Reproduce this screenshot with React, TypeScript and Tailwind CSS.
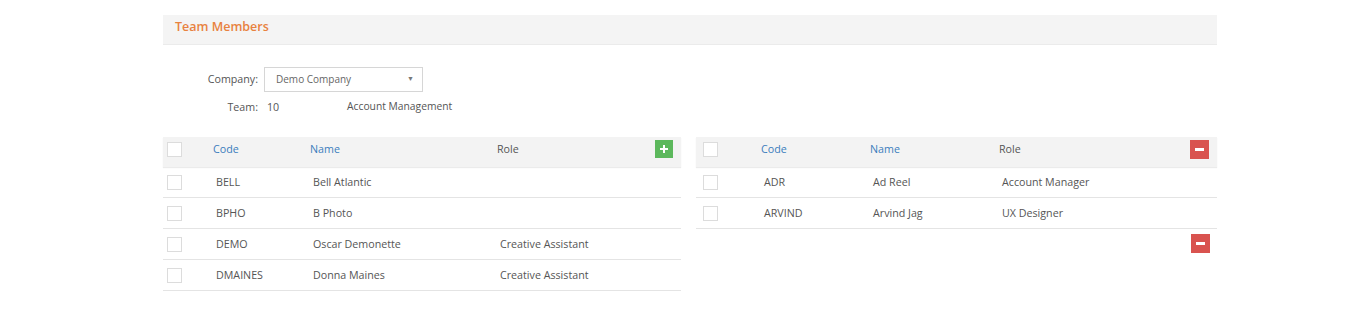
import React from "react";

type Member = { code: string; name: string; role: string };

const available: Member[] = [
  { code: "BELL", name: "Bell Atlantic", role: "" },
  { code: "BPHO", name: "B Photo", role: "" },
  { code: "DEMO", name: "Oscar Demonette", role: "Creative Assistant" },
  { code: "DMAINES", name: "Donna Maines", role: "Creative Assistant" },
];

const assigned: Member[] = [
  { code: "ADR", name: "Ad Reel", role: "Account Manager" },
  { code: "ARVIND", name: "Arvind Jag", role: "UX Designer" },
];

const Check = () => (
  <span className="block h-[15px] w-[15px] border border-[#dcdcdc] bg-white" />
);

const PlusButton = () => (
  <button className="flex h-[18px] w-[18px] items-center justify-center bg-[#5cb85c]">
    <svg width="8" height="8" viewBox="0 0 8 8">
      <path d="M4 0v8M0 4h8" stroke="#fff" strokeWidth="2" />
    </svg>
  </button>
);

const MinusButton = () => (
  <button className="flex h-[19px] w-[19px] items-center justify-center bg-[#d9534f]">
    <svg width="9" height="3" viewBox="0 0 9 3">
      <rect width="9" height="3" fill="#fff" />
    </svg>
  </button>
);

const MemberTable = ({
  rows,
  cols,
  checkLeft,
  action,
}: {
  rows: Member[];
  cols: string;
  checkLeft: string;
  action: React.ReactNode;
}) => {
  return (
    <div className="w-full">
      <div
        className={`grid h-[30px] items-center bg-[#f3f3f3] pb-[6px] shadow-[0_1px_1px_rgba(0,0,0,0.08)] ${cols}`}
      >
        <div className={checkLeft}>
          <Check />
        </div>
        <div className="-ml-[3px] text-[#3b7dbd]">Code</div>
        <div className="-ml-[3px] text-[#3b7dbd]">Name</div>
        <div className="-ml-[3px]">Role</div>
        <div className="flex justify-end pr-[8px]">{action}</div>
      </div>
      {rows.map((r) => (
        <div
          key={r.code}
          className={`grid h-[31px] items-center border-b border-[#e4e4e4] ${cols}`}
        >
          <div className={checkLeft}>
            <Check />
          </div>
          <div>{r.code}</div>
          <div>{r.name}</div>
          <div>{r.role}</div>
          <div />
        </div>
      ))}
    </div>
  );
};

export default function App() {
  return (
    <div className="h-[322px] w-[1370px] bg-white font-['Open_Sans',sans-serif] text-[10.7px] text-[#555]">
      <div className="ml-[163px] w-[1054px] pt-[15px]">
        <div className="flex h-[30px] items-center border-b border-[#ebebeb] bg-[#f4f4f4] pb-[4px] pl-[12px] text-[12.5px] font-semibold text-[#e8823f]">
          Team Members
        </div>

        <div className="mt-[22px] flex items-center">
          <div className="w-[95px] text-right">Company:</div>
          <div className="ml-[6px] flex h-[25px] w-[159px] items-center justify-between border border-[#d6d6d6] pl-[11px] pr-[8px] text-[10px] text-[#666]">
            <span>Demo Company</span>
            <span className="text-[7px] text-[#777]">▼</span>
          </div>
        </div>
        <div className="mt-[2px] flex h-[26px] items-center">
          <div className="w-[95px] text-right">Team:</div>
          <div className="ml-[9px] w-[80px]">10</div>
          <div className="text-[10.3px]">Account Management</div>
        </div>

        <div className="mt-[17px] flex gap-[15px]">
          <div className="w-[518px]">
            <MemberTable
              rows={available}
              cols="grid-cols-[53px_97px_187px_1fr_60px]"
              checkLeft="pl-[4px]"
              action={<PlusButton />}
            />
          </div>
          <div className="w-[521px]">
            <MemberTable
              rows={assigned}
              cols="grid-cols-[68px_109px_129px_1fr_60px]"
              checkLeft="pl-[7px]"
              action={<MinusButton />}
            />
            <div className="mt-[5px] flex justify-end pr-[7px]">
              <MinusButton />
            </div>
          </div>
        </div>
      </div>
    </div>
  );
}
